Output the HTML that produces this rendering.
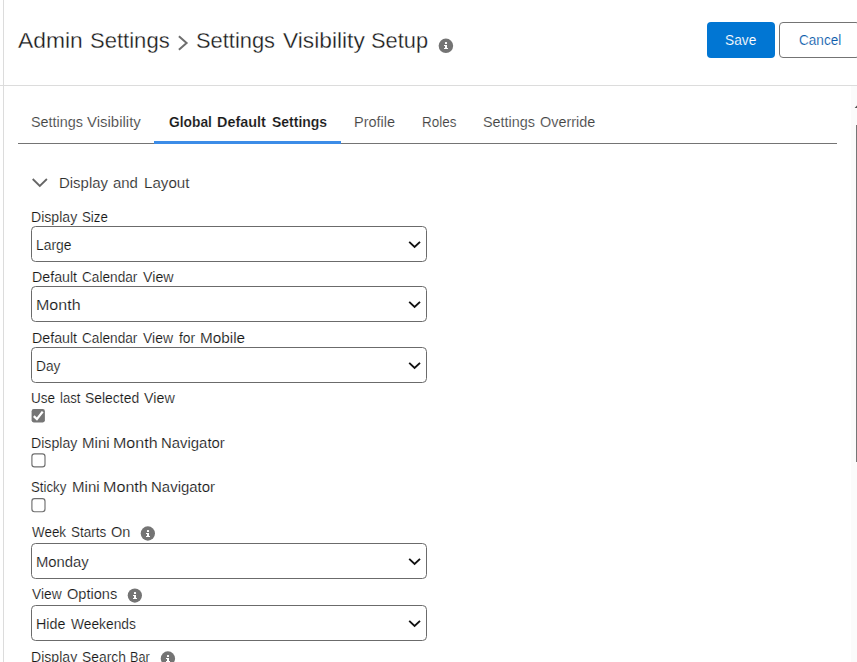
<!DOCTYPE html>
<html lang="en"><head><meta charset="utf-8"><title>Settings Visibility Setup</title>
<style>
html,body{margin:0;padding:0;background:#fff;}
body{width:857px;height:662px;overflow:hidden;position:relative;font-family:"Liberation Sans",Arial,sans-serif;}
.a{position:absolute;display:block}
.g{margin:0;padding:0;font:inherit;display:block;position:static;text-decoration:none;color:inherit}
.t{position:absolute;white-space:nowrap;line-height:20px;transform-origin:0 50%;-webkit-text-stroke:0.15px #fff;}
.sel{position:absolute;left:31px;width:394px;height:34px;border:1px solid #6b6b6b;border-radius:4.5px;background:#fff}
</style></head><body>
<div class="a" style="left:3px;top:0;width:1px;height:662px;background:#dcdcdc"></div>
<div class="a" style="left:0;top:85px;width:857px;height:1px;background:#dcdcdc"></div>
<div class="a" style="left:851px;top:86px;width:6px;height:576px;background:#fbfbfb"></div>
<svg class="a" style="left:851px;top:103px" width="6" height="8" viewBox="0 0 6 8"><path d="M3.6 5 L6 2.6 L6 5z" fill="#505050"/></svg>
<div class="a" style="left:856px;top:125px;width:1px;height:337px;background:#767676"></div>

<svg class="a" style="left:175px;top:33px" width="16" height="20" viewBox="0 0 16 20"><path d="M3.9 3.2 L11.6 10 L3.9 16.8" fill="none" stroke="#6e6e6e" stroke-width="2"/></svg>
<svg class="a" style="left:436px;top:36px" width="18" height="18" viewBox="0 0 18 18"><circle cx="9.90" cy="9.80" r="7.25" fill="#747474"/><g transform="translate(10 10)" fill="#fff"><rect x="-1.05" y="-3.9" width="2.1" height="1.9" rx="0.6"/><path d="M-2 -1h3v3h1v1.1h-4v-1.1h1v-1.9h-1z"/></g></svg>
<div class="a" style="left:707px;top:22px;width:68px;height:36px;border-radius:4px;background:#0176d3"></div>
<div class="a" style="left:779px;top:22px;width:79px;height:34px;border:1px solid #747474;border-radius:4px;background:#fff"></div>

<div class="a" style="left:18px;top:143px;width:819px;height:1px;background:#747474"></div>
<div class="a" style="left:154px;top:141px;width:187px;height:3px;background:#3c8ce7"></div>

<svg class="a" style="left:30px;top:175px" width="20" height="16" viewBox="0 0 20 16"><path d="M2.7 4 L9.8 11 L16.9 4" fill="none" stroke="#666" stroke-width="1.8"/></svg>

<div class="sel" style="top:226px"></div><svg class="a" style="left:407px;top:239.5px" width="16" height="10" viewBox="0 0 16 10"><path d="M2.2 1.9 L7.6 7.0 L13.0 1.9" fill="none" stroke="#111" stroke-width="1.9" stroke-linecap="butt" stroke-linejoin="miter"/></svg>
<div class="sel" style="top:286px"></div><svg class="a" style="left:407px;top:299.5px" width="16" height="10" viewBox="0 0 16 10"><path d="M2.2 1.9 L7.6 7.0 L13.0 1.9" fill="none" stroke="#111" stroke-width="1.9" stroke-linecap="butt" stroke-linejoin="miter"/></svg>
<div class="sel" style="top:347px"></div><svg class="a" style="left:407px;top:360.5px" width="16" height="10" viewBox="0 0 16 10"><path d="M2.2 1.9 L7.6 7.0 L13.0 1.9" fill="none" stroke="#111" stroke-width="1.9" stroke-linecap="butt" stroke-linejoin="miter"/></svg>
<svg class="a" style="left:30px;top:408px" width="17" height="17" viewBox="0 0 17 17"><rect x="1.60" y="1.10" width="13.3" height="13.3" rx="2.1" fill="#767676"/><path d="M3.80 8.20 L6.90 11.10 L12.70 3.60" fill="none" stroke="#fff" stroke-width="2.3"/></svg>
<svg class="a" style="left:30px;top:452px" width="17" height="17" viewBox="0 0 17 17"><rect x="1.90" y="1.80" width="13.1" height="13.1" rx="2.6" fill="#fff" stroke="#6f6f6f" stroke-width="1.15"/></svg>
<svg class="a" style="left:30px;top:497px" width="17" height="17" viewBox="0 0 17 17"><rect x="1.90" y="1.60" width="13.1" height="13.1" rx="2.6" fill="#fff" stroke="#6f6f6f" stroke-width="1.15"/></svg>
<svg class="a" style="left:138px;top:524px" width="18" height="18" viewBox="0 0 18 18"><circle cx="9.85" cy="9.50" r="7.15" fill="#747474"/><g transform="translate(10 10)" fill="#fff"><rect x="-1.05" y="-3.9" width="2.1" height="1.9" rx="0.6"/><path d="M-2 -1h3v3h1v1.1h-4v-1.1h1v-1.9h-1z"/></g></svg>
<div class="sel" style="top:543px"></div><svg class="a" style="left:407px;top:556.5px" width="16" height="10" viewBox="0 0 16 10"><path d="M2.2 1.9 L7.6 7.0 L13.0 1.9" fill="none" stroke="#111" stroke-width="1.9" stroke-linecap="butt" stroke-linejoin="miter"/></svg>
<svg class="a" style="left:125px;top:586px" width="18" height="18" viewBox="0 0 18 18"><circle cx="9.85" cy="9.55" r="7.15" fill="#747474"/><g transform="translate(10 10)" fill="#fff"><rect x="-1.05" y="-3.9" width="2.1" height="1.9" rx="0.6"/><path d="M-2 -1h3v3h1v1.1h-4v-1.1h1v-1.9h-1z"/></g></svg>
<div class="sel" style="top:605px"></div><svg class="a" style="left:407px;top:618.5px" width="16" height="10" viewBox="0 0 16 10"><path d="M2.2 1.9 L7.6 7.0 L13.0 1.9" fill="none" stroke="#111" stroke-width="1.9" stroke-linecap="butt" stroke-linejoin="miter"/></svg>
<svg class="a" style="left:158px;top:649px" width="18" height="18" viewBox="0 0 18 18"><circle cx="9.90" cy="9.45" r="7.15" fill="#747474"/><g transform="translate(10 10)" fill="#fff"><rect x="-1.05" y="-3.9" width="2.1" height="1.9" rx="0.6"/><path d="M-2 -1h3v3h1v1.1h-4v-1.1h1v-1.9h-1z"/></g></svg>
<h1 class="g"><span class="t" style="left:17.90px;top:31px;font-size:22.5px;font-weight:400;color:#181818;-webkit-text-stroke-width:0.3px;transform:scaleX(1.0143)">Admin</span> <span class="t" style="left:89.52px;top:31px;font-size:22.5px;font-weight:400;color:#181818;-webkit-text-stroke-width:0.3px;transform:scaleX(0.9800)">Settings</span></h1>
<h1 class="g"><span class="t" style="left:196.43px;top:31px;font-size:22.5px;font-weight:400;color:#181818;-webkit-text-stroke-width:0.3px;transform:scaleX(0.9725)">Settings</span> <span class="t" style="left:282.80px;top:31px;font-size:22.5px;font-weight:400;color:#181818;-webkit-text-stroke-width:0.3px;transform:scaleX(1.0111)">Visibility</span> <span class="t" style="left:371.33px;top:31px;font-size:22.5px;font-weight:400;color:#181818;-webkit-text-stroke-width:0.3px;transform:scaleX(0.9702)">Setup</span></h1>
<div class="g" role="button"><span class="t" style="left:725.41px;top:30px;font-size:15.5px;font-weight:400;color:#ffffff;-webkit-text-stroke-color:#0176d3;transform:scaleX(0.8853)">Save</span></div>
<div class="g" role="button"><span class="t" style="left:798.80px;top:30px;font-size:15.5px;font-weight:400;color:#0b5cab;transform:scaleX(0.8750)">Cancel</span></div>
<nav class="g"><a class="g"><span class="t" style="left:30.87px;top:112px;font-size:15.5px;font-weight:400;color:#444444;transform:scaleX(0.9291)">Settings</span> <span class="t" style="left:86.90px;top:112px;font-size:15.5px;font-weight:400;color:#444444;transform:scaleX(0.9661)">Visibility</span></a>
<a class="g"><span class="t" style="left:168.80px;top:112px;font-size:15.5px;font-weight:700;color:#181818;transform:scaleX(0.8896)">Global</span> <span class="t" style="left:216.87px;top:112px;font-size:15.5px;font-weight:700;color:#181818;transform:scaleX(0.9288)">Default</span> <span class="t" style="left:272.40px;top:112px;font-size:15.5px;font-weight:700;color:#181818;transform:scaleX(0.9016)">Settings</span></a>
<a class="g"><span class="t" style="left:353.77px;top:112px;font-size:15.5px;font-weight:400;color:#444444;transform:scaleX(0.9349)">Profile</span></a>
<a class="g"><span class="t" style="left:421.83px;top:112px;font-size:15.5px;font-weight:400;color:#444444;transform:scaleX(0.8692)">Roles</span></a>
<a class="g"><span class="t" style="left:482.87px;top:112px;font-size:15.5px;font-weight:400;color:#444444;transform:scaleX(0.9291)">Settings</span> <span class="t" style="left:539.90px;top:112px;font-size:15.5px;font-weight:400;color:#444444;transform:scaleX(0.9305)">Override</span></a></nav>
<h2 class="g"><span class="t" style="left:58.64px;top:173px;font-size:15.5px;font-weight:400;color:#2e2e2e;transform:scaleX(0.9640)">Display</span> <span class="t" style="left:113.40px;top:173px;font-size:15.5px;font-weight:400;color:#2e2e2e;transform:scaleX(0.9640)">and</span> <span class="t" style="left:143.52px;top:173px;font-size:15.5px;font-weight:400;color:#2e2e2e;transform:scaleX(0.9761)">Layout</span></h2>
<label class="g"><span class="t" style="left:31.19px;top:207px;font-size:14px;font-weight:400;color:#181818;transform:scaleX(1.0067)">Display</span> <span class="t" style="left:81.55px;top:207px;font-size:14px;font-weight:400;color:#181818;transform:scaleX(0.9500)">Size</span></label>
<div class="g" role="combobox"><span class="t" style="left:36.11px;top:235px;font-size:14px;font-weight:400;color:#181818;transform:scaleX(0.9914)">Large</span></div>
<label class="g"><span class="t" style="left:31.58px;top:267px;font-size:14px;font-weight:400;color:#181818;transform:scaleX(1.0159)">Default</span> <span class="t" style="left:82.30px;top:267px;font-size:14px;font-weight:400;color:#181818;transform:scaleX(0.9754)">Calendar</span> <span class="t" style="left:143.30px;top:267px;font-size:14px;font-weight:400;color:#181818;transform:scaleX(1.0167)">View</span></label>
<div class="g" role="combobox"><span class="t" style="left:35.95px;top:295px;font-size:14px;font-weight:400;color:#181818;transform:scaleX(1.1459)">Month</span></div>
<label class="g"><span class="t" style="left:31.58px;top:328px;font-size:14px;font-weight:400;color:#181818;transform:scaleX(1.0159)">Default</span> <span class="t" style="left:82.30px;top:328px;font-size:14px;font-weight:400;color:#181818;transform:scaleX(0.9754)">Calendar</span> <span class="t" style="left:143.30px;top:328px;font-size:14px;font-weight:400;color:#181818;transform:scaleX(0.9967)">View</span> <span class="t" style="left:178.60px;top:328px;font-size:14px;font-weight:400;color:#181818;transform:scaleX(0.9882)">for</span> <span class="t" style="left:200.21px;top:328px;font-size:14px;font-weight:400;color:#181818;transform:scaleX(1.0925)">Mobile</span></label>
<div class="g" role="combobox"><span class="t" style="left:36.12px;top:356px;font-size:14px;font-weight:400;color:#181818;transform:scaleX(0.9792)">Day</span></div>
<label class="g"><span class="t" style="left:31.23px;top:388px;font-size:14px;font-weight:400;color:#181818;transform:scaleX(0.9667)">Use</span> <span class="t" style="left:59.77px;top:388px;font-size:14px;font-weight:400;color:#181818;transform:scaleX(0.9333)">last</span> <span class="t" style="left:84.51px;top:388px;font-size:14px;font-weight:400;color:#181818;transform:scaleX(0.9943)">Selected</span> <span class="t" style="left:143.80px;top:388px;font-size:14px;font-weight:400;color:#181818;transform:scaleX(1.0200)">View</span></label>
<label class="g"><span class="t" style="left:31.19px;top:433px;font-size:14px;font-weight:400;color:#181818;transform:scaleX(1.0089)">Display</span> <span class="t" style="left:82.02px;top:433px;font-size:14px;font-weight:400;color:#181818;transform:scaleX(1.0750)">Mini</span> <span class="t" style="left:113.15px;top:433px;font-size:14px;font-weight:400;color:#181818;transform:scaleX(1.1459)">Month</span> <span class="t" style="left:161.24px;top:433px;font-size:14px;font-weight:400;color:#181818;transform:scaleX(1.0644)">Navigator</span></label>
<label class="g"><span class="t" style="left:31.25px;top:477px;font-size:14px;font-weight:400;color:#181818;transform:scaleX(0.9459)">Sticky</span> <span class="t" style="left:71.72px;top:477px;font-size:14px;font-weight:400;color:#181818;transform:scaleX(1.0750)">Mini</span> <span class="t" style="left:102.85px;top:477px;font-size:14px;font-weight:400;color:#181818;transform:scaleX(1.1514)">Month</span> <span class="t" style="left:151.13px;top:477px;font-size:14px;font-weight:400;color:#181818;transform:scaleX(1.0695)">Navigator</span></label>
<label class="g"><span class="t" style="left:32.10px;top:522px;font-size:14px;font-weight:400;color:#181818;transform:scaleX(0.9583)">Week</span> <span class="t" style="left:70.94px;top:522px;font-size:14px;font-weight:400;color:#181818;transform:scaleX(0.9600)">Starts</span> <span class="t" style="left:111.10px;top:522px;font-size:14px;font-weight:400;color:#181818;transform:scaleX(1.0389)">On</span></label>
<div class="g" role="combobox"><span class="t" style="left:36.04px;top:552px;font-size:14px;font-weight:400;color:#181818;transform:scaleX(1.0592)">Monday</span></div>
<label class="g"><span class="t" style="left:32.10px;top:584px;font-size:14px;font-weight:400;color:#181818;transform:scaleX(0.9833)">View</span> <span class="t" style="left:66.80px;top:584px;font-size:14px;font-weight:400;color:#181818;transform:scaleX(1.0396)">Options</span></label>
<div class="g" role="combobox"><span class="t" style="left:36.28px;top:614px;font-size:14px;font-weight:400;color:#181818;transform:scaleX(1.0214)">Hide</span> <span class="t" style="left:71.30px;top:614px;font-size:14px;font-weight:400;color:#181818;transform:scaleX(0.9848)">Weekends</span></div>
<label class="g"><span class="t" style="left:31.19px;top:647px;font-size:14px;font-weight:400;color:#181818;transform:scaleX(1.0067)">Display</span> <span class="t" style="left:81.51px;top:647px;font-size:14px;font-weight:400;color:#181818;transform:scaleX(0.9907)">Search</span> <span class="t" style="left:129.80px;top:647px;font-size:14px;font-weight:400;color:#181818;transform:scaleX(0.9048)">Bar</span></label>
</body></html>
